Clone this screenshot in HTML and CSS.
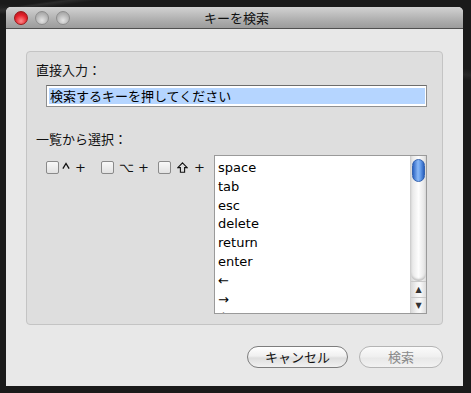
FILE: index.html
```html
<!DOCTYPE html>
<html>
<head>
  <title>キーを検索</title>
  <link rel="stylesheet" href="styles.css">
</head>
<body>
  <div class="window">
    <div class="titlebar">
      <div class="lights">
        <span class="light light-close"></span>
        <span class="light"></span>
        <span class="light"></span>
      </div>
      <div class="title">キーを検索</div>
    </div>
    <div class="content">
      <div class="group">
        <div class="label">直接入力：</div>
        <div class="field"><span class="selection">検索するキーを押してください</span></div>
        <div class="label label-list">一覧から選択：</div>
        <div class="picker">
          <div class="mods">
            <label class="mod mod-ctrl">
              <span class="check"></span>
              <svg class="caret-icon" width="8" height="8" viewBox="0 0 8 8"><polyline points="0.9,6.6 4,1.4 7.1,6.6" fill="none" stroke="#111" stroke-width="1.3"/></svg>
              <span class="plus">+</span>
            </label>
            <label class="mod mod-alt"><span class="check"></span><span class="sym">⌥</span><span class="plus">+</span></label>
            <label class="mod mod-shift">
              <span class="check"></span>
              <svg class="sym-icon" width="11" height="11" viewBox="0 0 11 11"><path d="M5.5 0.8 L10.2 5.6 H7.6 V10.2 H3.4 V5.6 H0.8 Z" fill="none" stroke="#111" stroke-width="1.1" stroke-linejoin="miter"/></svg>
              <span class="plus">+</span>
            </label>
          </div>
          <div class="listbox">
            <ul class="items">
              <li>space</li>
              <li>tab</li>
              <li>esc</li>
              <li>delete</li>
              <li>return</li>
              <li>enter</li>
              <li>←</li>
              <li>→</li>
              <li>↑</li>
            </ul>
            <div class="scrollbar">
              <div class="track"><div class="thumb"></div></div>
              <div class="arrow arrow-up">▲</div>
              <div class="arrow arrow-down">▼</div>
            </div>
          </div>
        </div>
      </div>
      <div class="buttons">
        <button class="btn">キャンセル</button>
        <button class="btn btn-disabled">検索</button>
      </div>
    </div>
  </div>
</body>
</html>
```
FILE: styles.css
```css
body {
  margin: 0;
  padding: 7px 8px 7px 6px;
  height: 393px;
  box-sizing: border-box;
  background-color: #1a1a1a;
  background-image: linear-gradient(172deg, transparent 0, transparent 8px, #2c2c2c 10px, transparent 14px),
                    linear-gradient(8deg, transparent 0, transparent 375px, #262626 380px, transparent 386px);
  font-family: "DejaVu Sans", "Noto Sans CJK JP", sans-serif;
  font-size: 13px;
  color: #000;
}

.window {
  width: 457px;
  height: 379px;
  display: flex;
  flex-direction: column;
  background-color: #e8e8e8;
  border-radius: 5px 5px 0 0;
  overflow: hidden;
}

.titlebar {
  height: 21px;
  flex: none;
  position: relative;
  display: flex;
  align-items: center;
  justify-content: center;
  background: linear-gradient(#d2d2d2, #aaaaaa 70%, #9c9c9c);
  border-bottom: 1px solid #505050;
}

.lights {
  position: absolute;
  left: 8px;
  top: 4px;
  display: flex;
  gap: 7px;
}

.light {
  width: 14px;
  height: 14px;
  border-radius: 50%;
  box-sizing: border-box;
  border: 1px solid #8d8d8d;
  background: radial-gradient(circle at 50% 70%, #e4e4e4, #b4b4b4 60%, #9a9a9a);
}

.light-close {
  border-color: #9a1818;
  background: radial-gradient(circle at 50% 75%, #ff8c8c, #e4202a 55%, #a3151c);
}

.title {
  font-family: "Noto Sans CJK JP", sans-serif;
  font-size: 13px;
  color: #111;
  margin-left: 4px;
}

.content {
  flex: 1;
  display: flex;
  flex-direction: column;
  padding: 22px 20px 0 20px;
}

.group {
  height: 274px;
  box-sizing: border-box;
  background-color: #dedede;
  border: 1px solid #c4c4c4;
  border-radius: 4px;
  padding: 9px 0 0 9px;
}

.label {
  font-family: "Noto Sans CJK JP", sans-serif;
  font-size: 13px;
  line-height: 18px;
  color: #111;
}

.field {
  margin: 6px 0 0 10px;
  width: 381px;
  height: 22px;
  box-sizing: border-box;
  background-color: #fff;
  border: 1px solid #8f8f8f;
  border-top-color: #6d6d6d;
  padding: 2px 1px 2px 2px;
  display: flex;
}

.selection {
  flex: 1;
  background-color: #b5d5ff;
  font-family: "Noto Sans CJK JP", sans-serif;
  font-size: 13px;
  line-height: 16px;
  padding-left: 1px;
}

.label-list {
  margin-top: 23px;
}

.picker {
  display: flex;
  margin-top: 7px;
}

.mods {
  display: flex;
  padding: 4px 0 0 10px;
  height: 16px;
}

.mod {
  display: flex;
  align-items: center;
  width: 55px;
}

.mod-alt {
  width: 57px;
}

.mod-shift {
  width: 56px;
}

.check {
  width: 13px;
  height: 13px;
  box-sizing: border-box;
  border: 1px solid #8a8a8a;
  border-radius: 2px;
  background: linear-gradient(#f8f8f8, #e2e2e2);
}

.caret-icon {
  margin-left: 3px;
  margin-top: -2px;
}

.sym {
  margin-left: 5px;
  font-size: 13px;
  color: #111;
}

.sym-icon {
  margin-left: 6px;
}

.plus {
  margin-left: 5px;
  font-size: 13px;
  color: #111;
}

.mod-alt .plus {
  margin-left: 4px;
}

.mod-shift .plus {
  margin-left: 6px;
}

.listbox {
  width: 213px;
  height: 159px;
  box-sizing: border-box;
  border: 1px solid #9a9a9a;
  background-color: #fff;
  display: flex;
  overflow: hidden;
}

.items {
  flex: 1;
  list-style: none;
  margin: 0;
  padding: 2px 0 0 3px;
}

.items li {
  height: 18.8px;
  line-height: 19px;
  font-size: 13px;
  white-space: nowrap;
}

.scrollbar {
  width: 15px;
  display: flex;
  flex-direction: column;
  border-left: 1px solid #cfcfcf;
  background: linear-gradient(90deg, #d9d9d9, #f4f4f4 40%, #fafafa 60%, #dcdcdc);
}

.track {
  flex: 1;
  padding: 1px 1px 0 1px;
  border-radius: 0 0 7px 7px;
  background: linear-gradient(90deg, #e4e4e4, #fdfdfd 50%, #e0e0e0);
  box-shadow: inset 0 -2px 2px #c4c4c4;
}

.thumb {
  height: 23px;
  border-radius: 7px;
  background: linear-gradient(90deg, #2d65c4, #8ab8f6 45%, #6aa2ee 65%, #2a5fbc);
  border: 1px solid #3463b0;
  box-sizing: border-box;
  margin-top: 2px;
}

.arrow {
  height: 15px;
  font-size: 8px;
  line-height: 15px;
  text-align: center;
  color: #333;
  border-top: 1px solid #c9c9c9;
}

.buttons {
  display: flex;
  justify-content: flex-end;
  gap: 11px;
  padding: 21px 0 0 0;
}

.btn {
  height: 22px;
  border-radius: 11px;
  border: 1px solid #7d7d7d;
  background: linear-gradient(#ffffff, #f0f0f0 45%, #dedede 55%, #f1f1f1);
  font-family: "Noto Sans CJK JP", sans-serif;
  font-size: 13px;
  line-height: 18px;
  color: #111;
  padding: 0;
  width: 101px;
}

.btn-disabled {
  width: 84px;
  border-color: #b4b4b4;
  color: #8a8a8a;
  background: linear-gradient(#fbfbfb, #efefef 50%, #e8e8e8 55%, #f2f2f2);
}
```
